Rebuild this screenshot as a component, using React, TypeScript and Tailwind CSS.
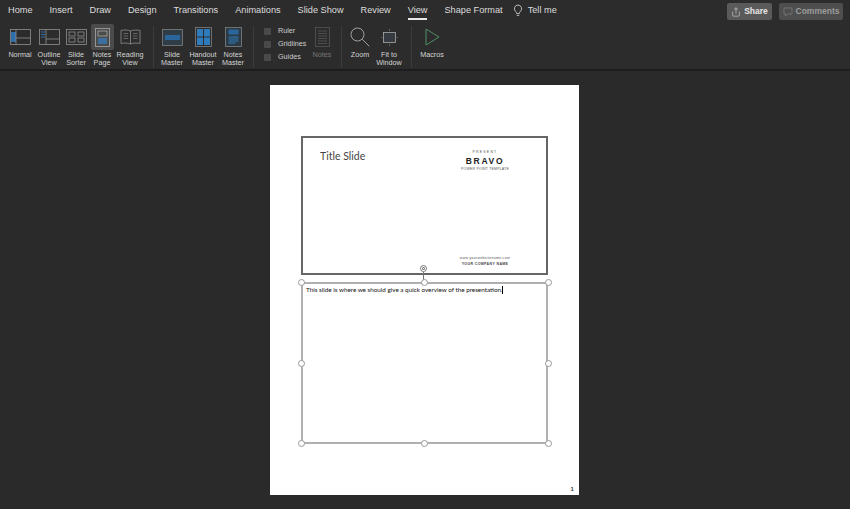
import type { ReactNode } from 'react';
import { Share } from 'lucide-react';

const tabs = ['Home', 'Insert', 'Draw', 'Design', 'Transitions', 'Animations', 'Slide Show', 'Review', 'View', 'Shape Format'];

function RibbonButton({ width, label, children, active }: { width: string; label: ReactNode; children: ReactNode; active?: boolean }) {
  return (
    <div className={`${width} flex flex-col items-center shrink-0`}>
      <div className={`h-[26px] w-[23px] flex items-center justify-center ${active ? 'bg-[#4b4b4b] rounded-[2px]' : ''}`}>{children}</div>
      <div className="mt-[1px] text-[7.2px] leading-[8px] text-center text-[#d4d4d4]">{label}</div>
    </div>
  );
}

function Separator({ className }: { className: string }) {
  return <div className={`w-px h-[42px] mt-[2px] bg-[#3c3c3c] shrink-0 ${className}`} />;
}

function CheckRow({ label }: { label: string }) {
  return (
    <div className="flex items-center h-[13px]">
      <div className="w-[7px] h-[7px] bg-[#4a4a4a] rounded-[1px]" />
      <span className="ml-[7px] text-[7.2px] text-[#cfcfcf]">{label}</span>
    </div>
  );
}

function Handle({ className }: { className: string }) {
  return <div className={`absolute w-[7px] h-[7px] rounded-full bg-white border border-[#999] ${className}`} />;
}

export default function App() {
  return (
    <div className="w-[850px] h-[509px] overflow-hidden bg-[#2a2a2a] font-['Liberation_Sans',sans-serif]">
      <div className="h-[71px] bg-[#2c2c2c] border-b-2 border-[#1d1d1d]">
        <div className="h-[23px] flex items-start pl-[8px] pr-[7px]">
          <div className="flex gap-[17px] pt-[5px]">
            {tabs.map((tab) => (
              <div key={tab} className="relative text-[9.2px] leading-[11px] text-[#dcdcdc]">
                {tab}
                {tab === 'View' && <div className="absolute left-0 right-0 top-[13px] h-[2px] bg-[#e8e8e8]" />}
              </div>
            ))}
          </div>
          <div className="flex items-center ml-[10px] pt-[4px]">
            <svg width="10" height="13" viewBox="0 0 10 13" fill="none" stroke="#c8c8c8" strokeWidth="0.9">
              <path d="M5 1a3.700 3.700 0 0 0-2.200 6.600c.5.5.7 1 .8 2h2.800c.1-1 .3-1.500.8-2A3.700 3.700 0 0 0 5 1zM3.800 11.400h2.400" />
            </svg>
            <span className="ml-[5px] text-[9.2px] text-[#dcdcdc]">Tell me</span>
          </div>
          <div className="ml-auto flex gap-[7px] pt-[3px]">
            <div className="h-[17px] w-[45px] rounded-[2px] bg-[#5a5a5a] flex items-center justify-center gap-[3px] text-[8.5px] font-semibold text-[#e6e6e6]">
              <Share size={10} strokeWidth={1.3} />
              Share
            </div>
            <div className="h-[17px] w-[64px] rounded-[2px] bg-[#4e4e4e] flex items-center justify-center gap-[3px] text-[8.5px] font-semibold text-[#9c9c9c]">
              <svg width="10" height="10" viewBox="0 0 10 10" fill="none" stroke="#7a7a7a" strokeWidth="0.8">
                <path d="M1 1h8v6H4.500L2.500 9V7H1z" />
              </svg>
              Comments
            </div>
          </div>
        </div>

        <div className="flex pl-[6px] pt-[1px]">
          <RibbonButton width="w-[28px]" label="Normal">
            <svg width="21" height="16" viewBox="0 0 21 16" fill="none" stroke="#8f8f8f" strokeWidth="0.8">
              <rect x="0.5" y="0.5" width="20" height="15" />
              <rect x="1" y="3" width="5" height="10" fill="#2f6fa8" stroke="none" />
              <path d="M6 .5v15M6 9h14" />
            </svg>
          </RibbonButton>
          <RibbonButton width="w-[30px]" label={<>Outline<br />View</>}>
            <svg width="21" height="16" viewBox="0 0 21 16" fill="none" stroke="#8f8f8f" strokeWidth="0.8">
              <rect x="0.5" y="0.5" width="20" height="15" />
              <path d="M2 3h4M2 5.500h4M2 8h4" stroke="#2f6fa8" strokeWidth="1.2" />
              <path d="M7 .5v15M7 10h13" />
            </svg>
          </RibbonButton>
          <RibbonButton width="w-[24px]" label={<>Slide<br />Sorter</>}>
            <svg width="21" height="16" viewBox="0 0 21 16" fill="none" stroke="#8f8f8f" strokeWidth="0.8">
              <rect x="0.5" y="0.5" width="20" height="15" />
              <rect x="3" y="3" width="6" height="4" />
              <rect x="12" y="3" width="6" height="4" />
              <rect x="3" y="9" width="6" height="4" />
              <rect x="12" y="9" width="6" height="4" />
            </svg>
          </RibbonButton>
          <RibbonButton width="w-[28px]" label={<>Notes<br />Page</>} active>
            <svg width="15" height="19" viewBox="0 0 15 19" fill="none" stroke="#a8a8a8" strokeWidth="0.8">
              <rect x="0.5" y="0.5" width="14" height="18" />
              <rect x="3" y="3" width="9" height="5" />
              <rect x="3" y="10" width="9" height="6" fill="#3a6f9f" stroke="none" />
            </svg>
          </RibbonButton>
          <RibbonButton width="w-[28px]" label={<>Reading<br />View</>}>
            <svg width="21" height="17" viewBox="0 0 21 17" fill="none" stroke="#8f8f8f" strokeWidth="0.8">
              <path d="M10.500 2C8 .8 4 .8 1 1.500v13c3-.7 7-.7 9.500.5 2.500-1.200 6.500-1.200 9.500-.5v-13C17 .8 13 .8 10.500 2zM10.500 2v13" />
              <path d="M3.500 4.500h4.500M3.500 7h4.500M3.500 9.500h4.500M13 4.500h4.500M13 7h4.500M13 9.500h4.500" strokeWidth="0.6" />
            </svg>
          </RibbonButton>

          <Separator className="ml-[9px] mr-[4px]" />

          <RibbonButton width="w-[28px]" label={<>Slide<br />Master</>}>
            <svg width="21" height="17" viewBox="0 0 21 17" fill="none">
              <rect x="0.5" y="0.5" width="20" height="16" stroke="#808080" strokeWidth="0.8" fill="#2f3d47" />
              <rect x="3" y="6" width="15" height="5" fill="#2a669b" />
            </svg>
          </RibbonButton>
          <RibbonButton width="w-[34px]" label={<>Handout<br />Master</>}>
            <svg width="17" height="20" viewBox="0 0 17 20" fill="none">
              <rect x="0.5" y="0.5" width="16" height="19" stroke="#808080" strokeWidth="0.8" />
              <rect x="2" y="2" width="6" height="7.500" fill="#2f7cbd" />
              <rect x="9" y="2" width="6" height="7.500" fill="#2f7cbd" />
              <rect x="2" y="10.500" width="6" height="7.500" fill="#2f7cbd" />
              <rect x="9" y="10.500" width="6" height="7.500" fill="#2f7cbd" />
            </svg>
          </RibbonButton>
          <RibbonButton width="w-[26px]" label={<>Notes<br />Master</>}>
            <svg width="17" height="20" viewBox="0 0 17 20" fill="none">
              <rect x="0.5" y="0.5" width="16" height="19" stroke="#808080" strokeWidth="0.8" fill="#2c3a45" />
              <rect x="3.500" y="2.500" width="10" height="5" fill="#2a669b" />
              <path d="M3.500 10h10M3.500 12h10M3.500 14h10M3.500 16h7" stroke="#2f7cbd" />
            </svg>
          </RibbonButton>

          <Separator className="ml-[7px] mr-[10px]" />

          <div className="w-[46px] shrink-0 pt-[1px]">
            <CheckRow label="Ruler" />
            <CheckRow label="Gridlines" />
            <CheckRow label="Guides" />
          </div>
          <RibbonButton width="w-[24px]" label={<span className="text-[#777]">Notes</span>}>
            <svg width="15" height="20" viewBox="0 0 15 20" fill="none" stroke="#555" strokeWidth="0.8">
              <rect x="0.5" y="0.5" width="14" height="19" />
              <path d="M3 4h9M3 6.500h9M3 9h9M3 11.500h9M3 14h9M3 16.500h9" />
            </svg>
          </RibbonButton>

          <Separator className="ml-[7px] mr-[4px]" />

          <RibbonButton width="w-[28px]" label="Zoom">
            <svg width="20" height="20" viewBox="0 0 20 20" fill="none" stroke="#a0a0a0" strokeWidth="1">
              <circle cx="7.500" cy="7.500" r="6.500" />
              <path d="M12.300 12.300l7 7" />
            </svg>
          </RibbonButton>
          <RibbonButton width="w-[30px]" label={<>Fit to<br />Window</>}>
            <svg width="17" height="17" viewBox="0 0 17 17" fill="none" stroke="#a9a9a9" strokeWidth="0.8">
              <rect x="2.500" y="3.500" width="12" height="10" fill="#353b40" />
              <path d="M8.500 0v2M8.500 15v2M0 8.500h1.500M15.500 8.500H17" stroke="#6d6d6d" />
            </svg>
          </RibbonButton>

          <Separator className="ml-[7px] mr-[4px]" />

          <RibbonButton width="w-[32px]" label="Macros">
            <svg width="15" height="18" viewBox="0 0 15 18" fill="none" stroke="#4f9064" strokeWidth="1">
              <path d="M1 1l13 8-13 8z" />
            </svg>
          </RibbonButton>
        </div>
      </div>

      <div className="pl-[270px] pt-[14px]">
        <div className="w-[309px] h-[410px] bg-white pt-[51px] pl-[31px] font-['Lato',sans-serif]">
          <div className="w-[247px] h-[139px] border-2 border-[#666] flex justify-between pl-[17px] pr-[31px] pt-[11px] pb-[6px]">
            <div className="text-[10.5px] leading-[15px] font-normal text-[#444]">Title Slide</div>
            <div className="flex flex-col justify-between items-center w-[60px] font-['Liberation_Sans',sans-serif]">
              <div className="flex flex-col items-center mt-[1px]">
                <div className="text-[3.500px] leading-[5px] tracking-[1.200px] text-[#555]">PRESENT</div>
                <div className="text-[8.500px] leading-[12px] font-bold tracking-[1.700px] text-[#222]">BRAVO</div>
                <div className="text-[3.500px] leading-[5px] tracking-[0.200px] whitespace-nowrap text-[#555]">POWER POINT TEMPLATE</div>
              </div>
              <div className="flex flex-col items-center">
                <div className="text-[3.500px] leading-[5px] tracking-[0.300px] whitespace-nowrap text-[#555]">www.yourwebsitename.com</div>
                <div className="text-[3.500px] leading-[6px] tracking-[0.400px] whitespace-nowrap font-bold text-[#444]">YOUR COMPANY NAME</div>
              </div>
            </div>
          </div>

          <div className="relative w-[247px] h-[162px] mt-[7px] border-2 border-[#b0b0b0] pl-[3px] pt-[1px]">
            <div className="flex items-center text-[6.300px] leading-[9px] font-normal text-[#111] whitespace-nowrap">
              This slide is where we should give a quick overview of the presentation.
              <span className="w-px h-[8px] bg-black" />
            </div>
            <div className="absolute left-[120px] top-[-12px] w-px h-[12px] bg-[#777]" />
            <div className="absolute left-[117px] top-[-19px] w-[7px] h-[7px] rounded-full bg-white border border-[#777] flex items-center justify-center">
              <div className="w-[3px] h-[3px] rounded-full border-[0.5px] border-[#555]" />
            </div>
            <Handle className="left-[-5px] top-[-5px]" />
            <Handle className="left-[118px] top-[-5px]" />
            <Handle className="right-[-6px] top-[-5px]" />
            <Handle className="left-[-5px] top-[76px]" />
            <Handle className="right-[-6px] top-[76px]" />
            <Handle className="left-[-5px] bottom-[-5px]" />
            <Handle className="left-[118px] bottom-[-5px]" />
            <Handle className="right-[-6px] bottom-[-5px]" />
          </div>

          <div className="mt-[41px] mr-[5px] text-right text-[6.500px] leading-[8px] font-medium text-[#222]">1</div>
        </div>
      </div>
    </div>
  );
}
